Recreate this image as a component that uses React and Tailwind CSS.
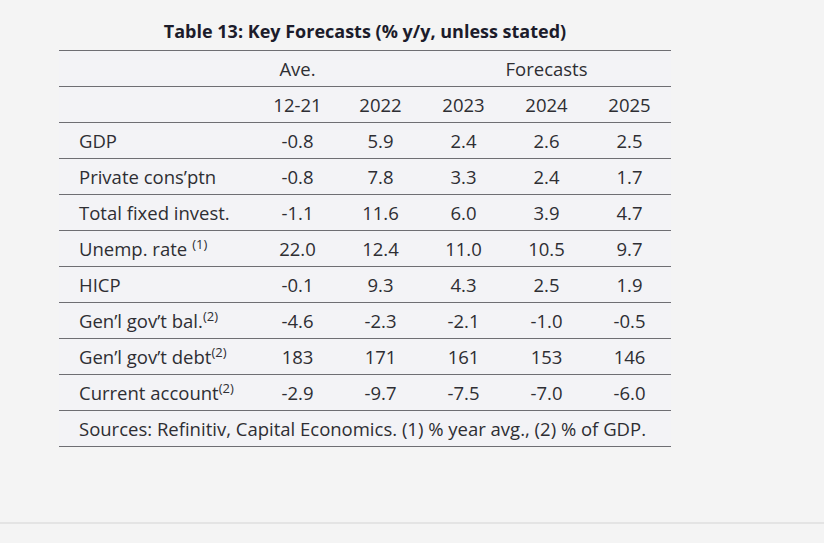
const rows = [
  { label: 'GDP', vals: ['-0.8', '5.9', '2.4', '2.6', '2.5'] },
  { label: 'Private cons’ptn', vals: ['-0.8', '7.8', '3.3', '2.4', '1.7'] },
  { label: 'Total fixed invest.', vals: ['-1.1', '11.6', '6.0', '3.9', '4.7'] },
  { label: 'Unemp. rate', note: '(1)', gap: true, vals: ['22.0', '12.4', '11.0', '10.5', '9.7'] },
  { label: 'HICP', vals: ['-0.1', '9.3', '4.3', '2.5', '1.9'] },
  { label: 'Gen’l gov’t bal.', note: '(2)', vals: ['-4.6', '-2.3', '-2.1', '-1.0', '-0.5'] },
  { label: 'Gen’l gov’t debt', note: '(2)', vals: ['183', '171', '161', '153', '146'] },
  { label: 'Current account', note: '(2)', vals: ['-2.9', '-9.7', '-7.5', '-7.0', '-6.0'] },
];

const cell = 'h-9 p-0 border-b border-[#6e6e73] text-center align-middle font-normal';

export default function App() {
  return (
    <div
      className="w-[824px] h-[543px] bg-[#f4f4f4] text-[#2e2e33] flex flex-col"
      style={{ fontFamily: '"Open Sans", "Noto Sans", sans-serif' }}
    >
      <div className="flex-1 pl-[59px]">
        <div className="w-[612px]">
          <h2 className="h-[50px] pt-[19px] text-center text-[18px] leading-[25px] font-bold text-[#1c1c2b]">
            Table 13: Key Forecasts (% y/y, unless stated)
          </h2>
          <table className="w-[612px] table-fixed border-collapse border-t border-[#6e6e73] bg-[#f3f3f6] text-[18.5px]">
            <colgroup>
              <col className="w-[197px]" />
              <col className="w-[83px]" />
              <col className="w-[83px]" />
              <col className="w-[83px]" />
              <col className="w-[83px]" />
              <col className="w-[83px]" />
            </colgroup>
            <thead>
              <tr>
                <th className={cell}></th>
                <th className={cell}>Ave.</th>
                <th className={cell}></th>
                <th className={cell} colSpan={3}>Forecasts</th>
              </tr>
              <tr>
                <th className={cell}></th>
                <th className={cell}>12-21</th>
                <th className={cell}>2022</th>
                <th className={cell}>2023</th>
                <th className={cell}>2024</th>
                <th className={cell}>2025</th>
              </tr>
            </thead>
            <tbody>
              {rows.map((r) => (
                <tr key={r.label}>
                  <td className={cell + ' !text-left pl-5 whitespace-nowrap'}>
                    {r.label}
                    {r.note && (
                      <sup className={'text-[13px] ' + (r.gap ? 'ml-[5px]' : '')}>{r.note}</sup>
                    )}
                  </td>
                  {r.vals.map((v, i) => (
                    <td key={i} className={cell}>{v}</td>
                  ))}
                </tr>
              ))}
              <tr>
                <td colSpan={6} className={cell + ' !text-left pl-5 whitespace-nowrap'}>
                  Sources: Refinitiv, Capital Economics. (1) % year avg., (2) % of GDP.
                </td>
              </tr>
            </tbody>
          </table>
        </div>
      </div>
      <div className="h-[21px] border-t-2 border-[#e4e4e4]"></div>
    </div>
  );
}
